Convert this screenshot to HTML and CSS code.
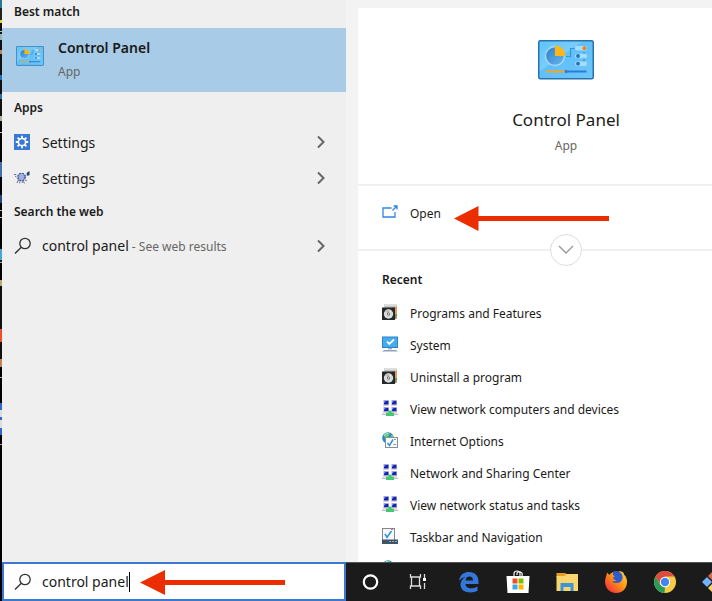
FILE: index.html
```html
<!DOCTYPE html>
<html lang="en">
<head>
<meta charset="utf-8">
<title>Search</title>
<link rel="stylesheet" href="styles.css">
</head>
<body>
<svg class="defs" aria-hidden="true">
  <defs>
    <linearGradient id="screen" x1="0" y1="0" x2="1" y2="1"><stop offset="0" stop-color="#5cc4fb"/><stop offset=".4" stop-color="#79ccfa"/><stop offset=".42" stop-color="#5fc0f8"/><stop offset="1" stop-color="#6fc6fa"/></linearGradient>
    <linearGradient id="pie" x1="0" y1="0" x2="1" y2="1"><stop offset="0" stop-color="#2d7fc6"/><stop offset="1" stop-color="#69b5ee"/></linearGradient>
    <linearGradient id="fox" x1="1" y1="0" x2="0" y2="1"><stop offset="0" stop-color="#ffe226"/><stop offset=".5" stop-color="#ff8a16"/><stop offset="1" stop-color="#f0144f"/></linearGradient>
    <symbol id="panel" viewBox="0 0 56 40">
      <rect x=".75" y=".75" width="54.500" height="38" rx="1.500" fill="url(#screen)" stroke="#2873ae" stroke-width="1.500"/>
      <circle cx="17" cy="16" r="9.500" fill="url(#pie)" stroke="#a9dcfb" stroke-width="1.300"/>
      <path d="M17 16V5.500A10.500 10.500 0 0 1 27.500 16z" fill="#fdb714"/>
      <path d="M28 16.500h4.500V8.500H38M46 12v11" fill="none" stroke="#3596dc" stroke-width="1.200"/>
      <rect x="37" y="6" width="12" height="4.500" rx="2" fill="#a7dcfb"/><circle cx="46.500" cy="8.200" r="1.900" fill="#f57c13"/>
      <rect x="37" y="13.700" width="12" height="4.500" rx="2" fill="#a7dcfb"/><circle cx="40" cy="16" r="1.900" fill="#2271b4"/>
      <rect x="37" y="21.500" width="12" height="4.500" rx="2" fill="#a7dcfb"/><circle cx="40" cy="23.700" r="1.900" fill="#2271b4"/>
      <path d="M8 31.500h19" stroke="#f8a51d" stroke-width="2"/><path d="M30 31.500h18.500" stroke="#287fd6" stroke-width="2"/><circle cx="28.300" cy="31.500" r="1.800" fill="#327fd0"/>
    </symbol>
    <symbol id="chevron" viewBox="0 0 10 14"><path d="M2 1.500 7.500 7 2 12.500" fill="none" stroke="#666" stroke-width="2"/></symbol>
    <symbol id="search" viewBox="0 0 18 18"><circle cx="11" cy="6.500" r="5.200" fill="none" stroke="#333" stroke-width="1.300"/><path d="M7.300 10.200 1 16.500" stroke="#333" stroke-width="1.400"/></symbol>
    <symbol id="programs" viewBox="0 0 16 17">
      <path d="M2 0h13v15H4z" fill="#bfc4c2"/><path d="M2 0h13v2H3z" fill="#dedede"/><path d="M10 3h5v10h-5z" fill="#e79a55"/><path d="M12 10h3l-1 5h-3z" fill="#5f986c"/>
      <rect x="0" y="3.500" width="13" height="12.500" fill="#25282a"/><circle cx="6.500" cy="10" r="4.700" fill="#d9dbda"/><path d="M6.500 10 3 7A4.700 4.700 0 0 1 7.500 5.400z" fill="#b8bab9"/><circle cx="6.500" cy="10" r="1.500" fill="#555"/><circle cx="6.500" cy="10" r=".8" fill="#fff"/>
    </symbol>
    <symbol id="system" viewBox="0 0 16 17"><rect x=".5" y="1" width="15" height="10.500" fill="#42acf0" stroke="#3280bd"/><path d="m5 5.500 2.300 2.500L12 3.500" fill="none" stroke="#fff" stroke-width="1.800"/><path d="M6 12h4v1.500H6z" fill="#a8b6c5"/><path d="M2 14h12l2 1.500H0z" fill="#8fa4ba"/></symbol>
    <symbol id="network" viewBox="0 0 16 17">
      <path d="M1 0h6v6H1zM9 0h6v6H9zM1 7h6v6H1zM9 7h6v6H9z" fill="#d3d6de"/>
      <path d="M2 .8h4.500v3.700H2zM10 .8h4.500v3.700H10zM2 7.800h4.500v3.400H2zM10 7.800h4.500v3.400H10z" fill="#1721b5"/>
      <path d="M2 .8h2L2 3zM10 .8h2L10 3zM2 7.800h2L2 10zM10 7.800h2L10 10z" fill="#7f98ff"/>
      <path d="M0 13.700h16v1H0z" fill="#a4aaa7"/><path d="M7 10.500h2.200l.8 2.300h2v3.200H4v-3.200h2z" fill="#45c675"/>
    </symbol>
    <symbol id="internet" viewBox="0 0 16 17"><circle cx="6" cy="6" r="5.800" fill="#2684cd"/><path d="M2 2.500Q6-1 8 1.500L6 5 3 7zM8 4l3-2v4z" fill="#72cb6b"/><path d="M2 4Q4 1 6 1" fill="none" stroke="#a5e3fa"/><rect x="3.500" y="5.500" width="12" height="10" fill="#fafafa" stroke="#858f96"/><path d="m5.500 11 2 2.500 3.500-6" fill="none" stroke="#2c94d6" stroke-width="1.500"/><path d="M12 7.500h2M11.500 12.500h2.500" stroke="#8a949b"/></symbol>
    <symbol id="taskbar" viewBox="0 0 16 17"><rect x=".5" y=".5" width="12" height="12" fill="#f8f8f8" stroke="#7e878d"/><path d="m3 6 2 3.300L9.500 3" fill="none" stroke="#2494dc" stroke-width="1.500"/><path d="M9 1.500h2" stroke="#d66"/><path d="M0 11.500h16V16H0z" fill="#405367"/><path d="M7 13.500h2M10 13.500h2M13 13.500h2" stroke="#8fa5ba"/></symbol>
    <symbol id="arrow-long" viewBox="0 0 155 25"><path d="M0 12.500 24.500 0v10H155v5H24.500v10z" fill="#eb2d00"/></symbol>
    <symbol id="arrow-short" viewBox="0 0 145 25"><path d="M0 12.500 25 0v10h120v5H25v10z" fill="#eb2d00"/></symbol>
  </defs>
</svg>

<div class="shell">
  <div class="desktop-edge"></div>
  <main class="flyout">
    <section class="results" aria-label="Results">
      <h2 class="group group-first">Best match</h2>
      <button class="best">
        <svg class="best-icon"><use href="#panel"/></svg>
        <span class="best-text"><strong class="best-name">Control Panel</strong><span class="kind">App</span></span>
      </button>
      <h2 class="group">Apps</h2>
      <button class="result">
        <svg class="result-icon" viewBox="0 0 16 16"><rect width="16" height="16" fill="#3a78d8"/><path d="M8 1.800v12.400M1.800 8h12.400M3.600 3.600l8.800 8.800M12.400 3.600l-8.800 8.800" stroke="#fff" stroke-width="1.800"/><circle cx="8" cy="8" r="3.600" fill="#3a78d8" stroke="#fff" stroke-width="1.500"/></svg>
        <span class="result-name">Settings</span><svg class="chevron"><use href="#chevron"/></svg>
      </button>
      <button class="result">
        <svg class="result-icon" viewBox="0 0 16 16"><circle cx="7.500" cy="7" r="3.800" fill="#7e94cd" stroke="#465a94" stroke-width="1.200" stroke-dasharray="2 1"/><path d="M5.500 5h4M5 7h5M5.500 9h4" stroke="#d2dcf7" stroke-width=".8"/><path d="M0 4.500h3M1 6l2 1.500M11 6l2.500-2M3 13l1-3 2 2-1 2M8 13l1-2 2 3M11 10l2 1" fill="none" stroke="#66728c" stroke-dasharray="2 .7"/><path d="m12.500 3 3-2v4l-2 1z" fill="#213e71"/></svg>
        <span class="result-name">Settings</span><svg class="chevron"><use href="#chevron"/></svg>
      </button>
      <h2 class="group">Search the web</h2>
      <button class="result">
        <svg class="search-icon"><use href="#search"/></svg>
        <span class="result-name">control panel<span class="hint"> - See web results</span></span><svg class="chevron"><use href="#chevron"/></svg>
      </button>
    </section>

    <div class="preview">
      <article class="card">
        <header class="hero">
          <svg class="hero-icon"><use href="#panel"/></svg>
          <h1 class="hero-name">Control Panel</h1>
          <span class="kind">App</span>
        </header>
        <div class="actions">
          <button class="action">
            <svg class="open-icon" viewBox="0 0 17 14"><path d="M9.500 3H1v9h12V7" fill="none" stroke="#2f86df" stroke-width="1.300"/><path d="m10.500 5.500 4-4M11.500 1H15v3.500" fill="none" stroke="#2f86df" stroke-width="1.300"/></svg>
            Open
          </button>
          <svg class="open-pointer" aria-hidden="true"><use href="#arrow-long"/></svg>
          <button class="expand" aria-label="Show more actions"><svg class="expand-icon" viewBox="0 0 16 10"><path d="m1 1 7 7 7-7" fill="none" stroke="#999" stroke-width="1.400"/></svg></button>
        </div>
        <section class="recent">
          <h2 class="recent-title">Recent</h2>
          <button class="recent-item"><svg class="recent-icon"><use href="#programs"/></svg>Programs and Features</button>
          <button class="recent-item"><svg class="recent-icon"><use href="#system"/></svg>System</button>
          <button class="recent-item"><svg class="recent-icon"><use href="#programs"/></svg>Uninstall a program</button>
          <button class="recent-item"><svg class="recent-icon"><use href="#network"/></svg>View network computers and devices</button>
          <button class="recent-item"><svg class="recent-icon"><use href="#internet"/></svg>Internet Options</button>
          <button class="recent-item"><svg class="recent-icon"><use href="#network"/></svg>Network and Sharing Center</button>
          <button class="recent-item"><svg class="recent-icon"><use href="#network"/></svg>View network status and tasks</button>
          <button class="recent-item"><svg class="recent-icon"><use href="#taskbar"/></svg>Taskbar and Navigation</button>
          <button class="recent-item" aria-label="Internet"><svg class="recent-icon"><use href="#internet"/></svg></button>
        </section>
      </article>
    </div>
  </main>

  <footer class="bar">
    <label class="searchbox">
      <svg class="search-icon"><use href="#search"/></svg>
      <input class="query" type="text" aria-label="Search" value="control panel" size="11">
      <span class="caret"></span>
      <svg class="query-pointer" aria-hidden="true"><use href="#arrow-short"/></svg>
    </label>
    <nav class="tasks" aria-label="Taskbar">
      <button class="task" aria-label="Cortana"><svg class="task-icon" viewBox="0 0 24 24"><circle cx="11.500" cy="12" r="6.700" fill="none" stroke="#fff" stroke-width="2.200"/></svg></button>
      <button class="task" aria-label="Task View"><svg class="task-icon" viewBox="0 0 24 24"><path d="M2.500 4v3h10V4M2.500 19v-3h10v3M3.500 7v9M11.500 7v9M16.500 4v4M16.500 13v6" fill="none" stroke="#ddd" stroke-width="1.300"/><path d="M15 8h3v3h-3z" fill="#fff"/></svg></button>
      <button class="task" aria-label="Edge"><svg class="task-icon" viewBox="0 0 24 24"><path d="M2 11C3 4.500 7 2 12 2c6 0 9.500 4 9.500 9.500V14H8.500c.2 3 2.600 4.300 5.700 4.300 2.500 0 4.500-.7 6.300-1.800v4.300c-2 1.200-4.400 1.700-7.200 1.700C7.500 22.500 3.500 19.500 3.500 14.500c0-3.300 1.800-5.700 5-7.200C6 7.500 3.500 8.800 2 11zm6.600-.5H16c0-2.600-1.300-3.900-3.600-3.900-2 0-3.500 1.600-3.800 3.900z" fill="#3576db"/></svg></button>
      <button class="task" aria-label="Store"><svg class="task-icon" viewBox="0 0 24 24"><path d="M8 6V3.500Q8 1 11 1t3 2.500V6M11 5V3q1-2 3.500-1T16 6" fill="none" stroke="#eee" stroke-width="1.200"/><path d="M.5 6h23l-1 17h-21z" fill="#fff"/><path d="M6.500 8.500h5v5h-5z" fill="#f04e23"/><path d="M12.500 8.500h5v5h-5z" fill="#80ba01"/><path d="M6.500 14.500h5v5h-5z" fill="#3aa8ef"/><path d="M12.500 14.500h5v5h-5z" fill="#f8b800"/></svg></button>
      <button class="task" aria-label="File Explorer"><svg class="task-icon" viewBox="0 0 24 24"><path d="M1.500 3h9l1 2-2 2h-8z" fill="#e3a020"/><path d="M11 4h12v17H1.500V6H10z" fill="#f9d66d"/><path d="M5.500 13h13v8h-3v-4h-7v4h-3z" fill="#3d94d8"/></svg></button>
      <button class="task" aria-label="Firefox"><svg class="task-icon" viewBox="0 0 24 24"><circle cx="13" cy="10" r="8.500" fill="#315bdd"/><path d="M14 1c4 2 5 5 4.500 7.500-1 5-6.500 5.500-8.500 3 2 .5 3-1 4-1.500-2-1-3-.5-4-1.500s0-2 1.500-2.500C9 5.500 8.500 3.500 9 2 7 3 6 4 5.500 5L3 2.500c0 2-2 5.500-2 9C1 18 5.500 23 12 23s11-4.500 11-11c0-3-1-6-3-7.500 0-2-2-3.500-6-3.500z" fill="url(#fox)"/><path d="M9 1.500C12 0 14.500 1.500 16 4c1 2 1 5-.5 7-2 2.500-6 2.500-7.500 0 2 .8 3.500 0 4.500-1-2 0-3-.5-3.500-2L11 6.500C9 5.500 8.500 3.500 9 1.500z" fill="#315bcb"/></svg></button>
      <button class="task" aria-label="Chrome"><svg class="task-icon" viewBox="0 0 24 24"><circle cx="12" cy="12" r="11" fill="#f9cb45"/><path d="M2.500 6.500A11 11 0 0 1 21.500 6.500H12L7 14z" fill="#dd4b3e"/><path d="M2.500 6.500 7.200 14.700l4.800 2.800L11.500 23A11 11 0 0 1 2.500 6.500z" fill="#299b58"/><circle cx="12" cy="12" r="5.200" fill="#fff"/><circle cx="12" cy="12" r="4.200" fill="#4285f4"/></svg></button>
      <button class="task" aria-label="Tools"><svg class="task-icon" viewBox="0 0 24 24"><path d="m5 7 5 5-5 5-5-5z" fill="#74b3fa"/><path d="m11 1 5 5-5 5-5-5z" fill="#df6849"/><path d="m11 13 5 5-5 5-5-5z" fill="#fbd461"/></svg></button>
    </nav>
  </footer>
</div>
</body>
</html>
```
FILE: styles.css
```css
* { box-sizing: border-box; }

body {
  margin: 0;
  background: #000;
  color: #1a1a1a;
  font: 12px/20px "Noto Sans", "Open Sans", sans-serif;
}

button {
  margin: 0;
  padding: 0;
  border: 0;
  background: none;
  color: inherit;
  font: inherit;
  text-align: left;
}

h1, h2 { margin: 0; }
svg { display: block; flex: none; }
.defs { position: absolute; width: 0; height: 0; }

.shell {
  display: grid;
  grid-template: minmax(0, 1fr) 39px / 2px minmax(0, 1fr);
  height: 100vh;
  overflow: hidden;
}

/* Sliver of the desktop left of the flyout */
.desktop-edge {
  grid-row: 1 / 3;
  background: linear-gradient(#287a96 0 8px, #222 8px 20px, #d8d51c 20px 23px, #111 23px 31px, #bbb 31px 32px, #111 32px 34px, #8db8b5 34px 40px, #111 40px 50px, #b98757 50px 54px, #111 54px 75px, #286fb6 75px 80px, #111 80px 94px, #286fb6 94px 99px, #111 99px 116px, #a7b49e 116px 121px, #000 121px 132px, #ccc 132px 133px, #000 133px 162px, #446fae 162px 177px, #000 177px 195px, #244782 195px 203px, #000 203px 210px, #aaa 210px 211px, #000 211px 217px, #bbb 217px 218px, #000 218px 249px, #47a5d1 249px 260px, #222 260px 262px, #aaa 262px 263px, #000 263px 280px, #bba878 280px 286px, #111 286px 329px, #ea5128 329px 342px, #111 342px 359px, #bd8650 359px 367px, #000 367px 377px, #aaa 377px 378px, #000 378px 403px, #2c68cd 403px 410px, #ddd 410px 417px, #2c68cd 417px 420px, #ddd 420px 428px, #2c68cd 428px 435px, #000 435px 444px, #aaa 444px 445px, #000 445px);
}

.flyout { display: flex; min-height: 0; overflow: hidden; background: #f3f3f3; }
.results { flex: none; width: 344px; background: #efefef; }

.group {
  padding: 6px 12px;
  font-size: 12px;
  font-weight: 600;
  line-height: 20px;
}
.group-first { padding-top: 2px; }

.best {
  display: flex;
  gap: 14px;
  width: 100%;
  height: 64px;
  padding: 8px 14px;
  background: #a8cbe7;
}
.best-icon { width: 28px; height: 20px; margin-top: 10px; }
.best-text { display: flex; flex-direction: column; gap: 2px; }
.best-name { font-size: 14px; font-weight: 600; line-height: 24px; }
.kind { color: #666; font-size: 12px; line-height: 20px; }

.result {
  display: flex;
  align-items: center;
  gap: 12px;
  width: 100%;
  height: 36px;
  padding: 0 20px 0 12px;
  font-size: 14px;
}
.result-icon { width: 16px; height: 16px; }
.search-icon { width: 18px; height: 18px; margin-right: -2px; }
.result-name { flex: 1; padding-top: 1px; }
.hint { color: #666; font-size: 12px; }
.chevron { width: 10px; height: 14px; }

.preview { flex: 1 0 428px; padding: 8px 0 0 12px; }
.card { height: 100%; overflow: hidden; background: #fff; }

.hero {
  display: flex;
  flex-direction: column;
  align-items: center;
  height: 178px;
  padding-top: 32px;
  border-bottom: 2px solid #f0f0f0;
}
.hero-icon { width: 56px; height: 40px; }
.hero-name { margin: 26px 0 2px; font-size: 17px; font-weight: 400; line-height: 28px; }

.actions { position: relative; height: 65px; padding-top: 12px; border-bottom: 2px solid #f0f0f0; }
.action { display: flex; align-items: center; gap: 11px; width: 100%; height: 32px; padding: 0 24px; }
.open-icon { width: 17px; height: 14px; margin-bottom: 4px; }
.open-pointer { position: absolute; top: 20px; left: 96px; width: 155px; height: 25px; }
.expand {
  position: absolute;
  bottom: -17px;
  left: 50%;
  display: grid;
  place-items: center;
  width: 32px;
  height: 32px;
  margin-left: -16px;
  border: 1px solid #ddd;
  border-radius: 50%;
  background: #fff;
}
.expand-icon { width: 16px; height: 10px; }

.recent { padding-top: 19px; }
.recent-title { padding: 0 24px; margin-bottom: 8px; font-size: 12px; font-weight: 600; line-height: 20px; }
.recent-item { display: flex; align-items: center; gap: 12px; width: 100%; height: 32px; padding: 0 24px; }
.recent-icon { width: 16px; height: 17px; margin-bottom: 4px; }

.bar { display: flex; min-width: 0; overflow: hidden; background: #1b1b1b; }
.searchbox {
  position: relative;
  display: flex;
  flex: none;
  align-items: center;
  width: 344px;
  padding-left: 10px;
  border: 2px solid #3b78d0;
  background: #fff;
}
.query {
  field-sizing: content;
  margin: 0 0 0 12px;
  padding: 1px 0 0;
  border: 0;
  outline: 0;
  background: none;
  color: inherit;
  font: inherit;
  font-size: 14px;
}
.caret { width: 1px; height: 20px; background: #000; }
.query-pointer { position: absolute; top: 6px; left: 136px; width: 145px; height: 25px; }

.tasks { display: flex; flex: 1; min-width: 0; overflow: hidden; border-top: 1px solid #555; }
.task { display: grid; flex: none; place-items: center; width: 49px; }
.task-icon { width: 24px; height: 24px; }
```
